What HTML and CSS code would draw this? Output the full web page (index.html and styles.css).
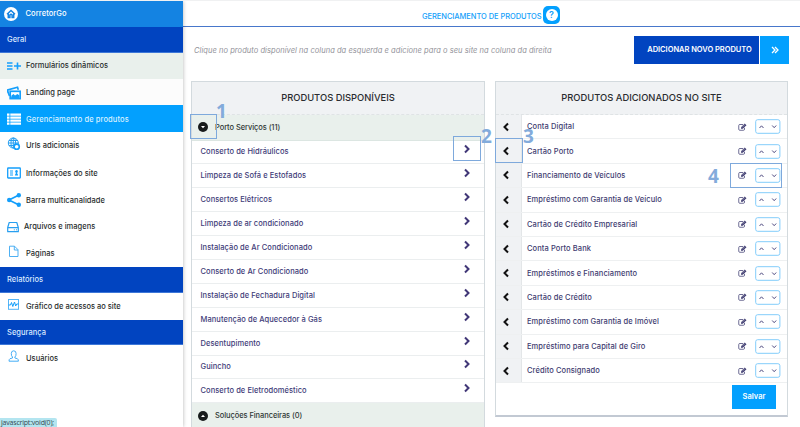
FILE: index.html
```html
<!DOCTYPE html>
<html lang="pt-BR">
<head>
<meta charset="utf-8">
<title>CorretorGo</title>
<link rel="stylesheet" href="styles.css">
</head>
<body>
<svg class="defs" width="0" height="0">
  <symbol id="right" viewBox="0 0 8 10"><path d="M2 1.5 5.5 5 2 8.5" fill="none" stroke="currentColor" stroke-width="2"/></symbol>
  <symbol id="left" viewBox="0 0 8 10"><path d="M6 1.5 2.5 5 6 8.500" fill="none" stroke="currentColor" stroke-width="2"/></symbol>
  <symbol id="edit" viewBox="0 0 18 16"><path d="M13 9.500V12.500a2 2 0 0 1-2 2H3.500a2 2 0 0 1-2-2V5a2 2 0 0 1 2-2H10" fill="none" stroke="currentColor" stroke-width="1.500"/><path d="M6 11.500V8.500L13.500 1 17 4.300 9.500 11.500Z" fill="currentColor"/><path d="M8 9 14 3" stroke="#fff" stroke-width=".8"/></symbol>
  <symbol id="updown" viewBox="0 0 26 15"><rect x=".7" y=".7" width="24.200" height="13.600" rx="2" fill="#fff" stroke="#83cdfb" stroke-width="1"/><path d="M4.500 9 6.500 6.800 8.500 9M17.200 6.500l2 2.200 2-2.200" fill="none" stroke="#524e83" stroke-width="1"/></symbol>
</svg>
<div class="app">
  <aside class="sidebar">
    <div class="brand"><svg width="14" height="14" viewBox="0 0 14 14"><circle cx="7" cy="7" r="7" fill="#fff"/><path d="M3 7.200 7 3.500l4 3.700M4.300 6.800v3.700h1.600V8q1.100-1.300 2.200 0v2.500h1.600V6.800" fill="none" stroke="#1483e2" stroke-width="1.500"/></svg><span>CorretorGo</span></div>
    <div class="section geral">Geral</div>
    <a class="item mint"><svg width="14" height="14" viewBox="0 0 14 14"><path d="M0 4h5.500M0 7h5.500M0 10h5.500M7 7h7M10.500 3.500v7" stroke="#159ffb" stroke-width="1.600"/></svg><span>Formulários dinâmicos</span></a>
    <a class="item soft"><svg width="14" height="14" viewBox="0 0 14 14"><path d="M.8 6.500V4L10.500 1.300l.8 2.500M1 6l1.500 4" fill="none" stroke="#159ffb" stroke-width="1.700"/><rect x="3.200" y="5.300" width="10" height="7.300" fill="#fff" stroke="#159ffb" stroke-width="1.700"/><path d="m4 12 .5-2.500L6.500 8l1.500 1.500L10.500 8l2 1.500V12Z" fill="#159ffb"/></svg><span>Landing page</span></a>
    <a class="item active"><svg width="14" height="14" viewBox="0 0 14 14"><path d="M0 2.700h2.500M0 5.700h2.500M0 8.700h2.500M0 11.700h2.500M3.300 2.700H14M3.300 5.700H14M3.300 8.700H14M3.300 11.700H14" stroke="#fff" stroke-width="2.200"/></svg><span>Gerenciamento de produtos</span></a>
    <a class="item urls"><svg width="14" height="14" viewBox="0 0 14 14"><g fill="none" stroke="#289ff0" stroke-width="1"><circle cx="6.300" cy="6" r="5"/><ellipse cx="6.300" cy="6" rx="2.300" ry="5"/><path d="M1.300 6h10M2 3.500h8.600M2 8.500h7M6.300 1v10"/></g><circle cx="9.700" cy="9.700" r="2.600" fill="#fff" stroke="#159ffb" stroke-width="1.600"/></svg><span>Urls adicionais</span></a>
    <a class="item info"><svg width="14" height="14" viewBox="0 0 14 14"><rect x=".7" y="2" width="12.600" height="10" rx=".5" fill="#fff" stroke="#159ffb" stroke-width="1.300"/><path d="M3 5h3M3 7h3M3 9h3" stroke="#159ffb" stroke-width="1.100"/><circle cx="9.500" cy="5.300" r="1.200" fill="#159ffb"/><path d="M8.700 6h1.600v2.200H11V9.500H8V8.200h.7Z" fill="#159ffb"/></svg><span>Informações do site</span></a>
    <a class="item"><svg width="14" height="14" viewBox="0 0 14 14"><path d="M12 2 2 7l10 5" fill="none" stroke="#159ffb" stroke-width="1.700"/><g fill="#159ffb"><circle cx="11.800" cy="2.200" r="2.200"/><circle cx="2.200" cy="7" r="2.200"/><circle cx="11.800" cy="11.800" r="2.200"/></g></svg><span>Barra multicanalidade</span></a>
    <a class="item files"><svg width="12" height="14" viewBox="0 0 12 14"><path d="M.7 7.500 2.200 2.500h7.600l1.500 5v4.200H.7ZM.7 7.700h10.600" fill="none" stroke="#289ff0" stroke-width="1.200" stroke-linejoin="round"/><path d="M6.800 9.800h1M9 9.800h1" stroke="#289ff0"/></svg><span>Arquivos e imagens</span></a>
    <a class="item pages"><svg width="14" height="14" viewBox="0 0 14 14"><path d="M2.500 1.200H7.500l3.500 3.500v6.800H2.500ZM7.300 1.200V5H11" fill="none" stroke="#3aa7f2" stroke-width=".9"/></svg><span>Páginas</span></a>
    <div class="section rel">Relatórios</div>
    <a class="item graph"><svg width="14" height="14" viewBox="0 0 14 14"><rect x="1.500" y="1.500" width="10" height="9.800" fill="none" stroke="#55b5f7"/><path d="M1.500 7h2l1-2.500 1.300 4L7.500 4 8.700 8l1-2h2" fill="none" stroke="#159ffb"/></svg><span>Gráfico de acessos ao site</span></a>
    <div class="section seg">Segurança</div>
    <a class="item users"><svg width="14" height="14" viewBox="0 0 14 14"><path d="M4.300 3.500q0-2.700 2.400-2.700T9.100 3.500q0 2.700-1.200 3.500v1l2.500.7q1 .5 1 2.500H2q0-2 1-2.500L5.500 8V7Q4.300 6.200 4.300 3.500Z" fill="none" stroke="#45aef6" stroke-width="1"/></svg><span>Usuários</span></a>
    <div class="status">javascript:void(0);</div>
  </aside>
  <main>
    <header><h1>GERENCIAMENTO DE PRODUTOS</h1><span class="help"><b>?</b></span></header>
    <div class="bar">
      <p>Clique no produto disponível na coluna da esquerda e adicione para o seu site na coluna da direita</p>
      <button class="add">ADICIONAR NOVO PRODUTO</button>
      <button class="next"><svg width="8" height="8" viewBox="0 0 8 8"><path d="m1 1 3 3-3 3M4 1l3 3-3 3" fill="none" stroke="#fff" stroke-width="1.300"/></svg></button>
    </div>
    <div class="cols">
      <section class="panel available">
        <h2>PRODUTOS DISPONÍVEIS</h2>
        <div class="group"><svg width="10" height="10" viewBox="0 0 10 10"><circle cx="5" cy="5" r="5" fill="#171b1b"/><path d="M3 4h4L5 6.300Z" fill="#fff"/></svg><span>Porto Serviços (11)</span></div>
        <div class="row"><span>Conserto de Hidráulicos</span><svg><use href="#right"/></svg></div>
        <div class="row"><span>Limpeza de Sofá e Estofados</span><svg><use href="#right"/></svg></div>
        <div class="row"><span>Consertos Elétricos</span><svg><use href="#right"/></svg></div>
        <div class="row"><span>Limpeza de ar condicionado</span><svg><use href="#right"/></svg></div>
        <div class="row"><span>Instalação de Ar Condicionado</span><svg><use href="#right"/></svg></div>
        <div class="row"><span>Conserto de Ar Condicionado</span><svg><use href="#right"/></svg></div>
        <div class="row"><span>Instalação de Fechadura Digital</span><svg><use href="#right"/></svg></div>
        <div class="row"><span>Manutenção de Aquecedor à Gás</span><svg><use href="#right"/></svg></div>
        <div class="row"><span>Desentupimento</span><svg><use href="#right"/></svg></div>
        <div class="row"><span>Guincho</span><svg><use href="#right"/></svg></div>
        <div class="row"><span>Conserto de Eletrodoméstico</span><svg><use href="#right"/></svg></div>
        <div class="group"><svg width="10" height="10" viewBox="0 0 10 10"><circle cx="5" cy="5" r="5" fill="#171b1b"/><path d="M3 6h4L5 3.700Z" fill="#fff"/></svg><span>Soluções Financeiras (0)</span></div>
      </section>
      <section class="panel added">
        <h2>PRODUTOS ADICIONADOS NO SITE</h2>
        <div class="line"><i><svg class="back"><use href="#left"/></svg></i><span>Conta Digital</span><svg class="edit"><use href="#edit"/></svg><svg class="ud"><use href="#updown"/></svg></div>
        <div class="line"><i><svg class="back"><use href="#left"/></svg></i><span>Cartão Porto</span><svg class="edit"><use href="#edit"/></svg><svg class="ud"><use href="#updown"/></svg></div>
        <div class="line"><i><svg class="back"><use href="#left"/></svg></i><span>Financiamento de Veículos</span><svg class="edit"><use href="#edit"/></svg><svg class="ud"><use href="#updown"/></svg></div>
        <div class="line"><i><svg class="back"><use href="#left"/></svg></i><span>Empréstimo com Garantia de Veículo</span><svg class="edit"><use href="#edit"/></svg><svg class="ud"><use href="#updown"/></svg></div>
        <div class="line"><i><svg class="back"><use href="#left"/></svg></i><span>Cartão de Crédito Empresarial</span><svg class="edit"><use href="#edit"/></svg><svg class="ud"><use href="#updown"/></svg></div>
        <div class="line"><i><svg class="back"><use href="#left"/></svg></i><span>Conta Porto Bank</span><svg class="edit"><use href="#edit"/></svg><svg class="ud"><use href="#updown"/></svg></div>
        <div class="line"><i><svg class="back"><use href="#left"/></svg></i><span>Empréstimos e Financiamento</span><svg class="edit"><use href="#edit"/></svg><svg class="ud"><use href="#updown"/></svg></div>
        <div class="line"><i><svg class="back"><use href="#left"/></svg></i><span>Cartão de Crédito</span><svg class="edit"><use href="#edit"/></svg><svg class="ud"><use href="#updown"/></svg></div>
        <div class="line"><i><svg class="back"><use href="#left"/></svg></i><span>Empréstimo com Garantia de Imóvel</span><svg class="edit"><use href="#edit"/></svg><svg class="ud"><use href="#updown"/></svg></div>
        <div class="line"><i><svg class="back"><use href="#left"/></svg></i><span>Empréstimo para Capital de Giro</span><svg class="edit"><use href="#edit"/></svg><svg class="ud"><use href="#updown"/></svg></div>
        <div class="line"><i><svg class="back"><use href="#left"/></svg></i><span>Crédito Consignado</span><svg class="edit"><use href="#edit"/></svg><svg class="ud"><use href="#updown"/></svg></div>
        <button class="save">Salvar</button>
      </section>
    </div>
  </main>
  <div class="mark m1"></div><b class="num n1">1</b>
  <div class="mark m2"></div><b class="num n2">2</b>
  <div class="mark m3"></div><b class="num n3">3</b>
  <div class="mark m4"></div><b class="num n4">4</b>
</div>
</body>
</html>
```
FILE: styles.css
```css
* { box-sizing: border-box; }
body { margin: 0; font-family: Inter, "Liberation Sans", sans-serif; font-size: 7.5px; background: #fff; }
svg { display: block; flex: none; }
.defs { position: absolute; }
.app { position: relative; display: flex; width: 800px; height: 427px; overflow: hidden; border-top: 1px solid #f0f1f2; }
button { border: 0; padding: 0; font-family: inherit; color: #fff; }

.sidebar { width: 183px; flex: none; display: flex; flex-direction: column; box-shadow: 0 0 4px rgba(0,0,0,.3); z-index: 1; background: #fff; }
.brand { height: 26px; flex: none; background: #1483e2; color: #fff; display: flex; align-items: center; padding: 0 0 1px 4px; gap: 7.5px; font-weight: 500; letter-spacing: .09px; }
.section { height: 25.5px; flex: none; background: #0144c0; color: #dceaff; padding-left: 7px; line-height: 25px; font-weight: 500; border-bottom: 1px solid #3d77d8; letter-spacing: .04px; }
.item { height: 26.5px; flex: none; display: flex; align-items: center; padding-left: 7px; color: #272c2c; font-weight: 500; white-space: nowrap; letter-spacing: .04px; }
.item svg { margin-right: 5px; }
.mint { background: #e9f0ec; height: 26px; }
.soft { background: #fcfcfc; padding-top: 2px; }
.active { background: #03a0fe; color: #d8f0ff; padding-top: 2px; letter-spacing: .12px; }
.urls { height: 28px; }
.urls svg, .pages svg, .graph svg, .users svg { margin-top: -3px; }
.info { height: 27.5px; }
.rel { margin-top: .5px; }
.graph { height: 27px; letter-spacing: 0; }

.status { margin-top: auto; width: 57px; height: 9px; background: #b3e5f0; color: #34474e; font: 7px/9px "Open Sans", sans-serif; padding-left: 1px; border-radius: 0 2px 0 0; white-space: nowrap; letter-spacing: -.2px; }

main { flex: 1; min-width: 0; }
header { height: 26px; border-bottom: 1px solid #4777cb; display: flex; align-items: flex-start; padding: 5px 0 0 239px; }
h1 { margin: 0; width: 121px; font-size: 7.5px; line-height: 21px; font-weight: 500; color: #169ffa; white-space: nowrap; letter-spacing: -.06px; }
.help { width: 17px; height: 18px; border-radius: 5px; background: #03a0fe; display: flex; align-items: center; justify-content: center; }
.help b { width: 12px; height: 12px; border-radius: 50%; background: #fff; color: #159ffb; font-size: 9px; line-height: 12px; text-align: center; font-weight: 600; }
.bar { height: 54px; display: flex; align-items: flex-start; padding: 9px 11px 0 11px; }
.bar p { flex: 1; margin: 0; line-height: 29px; font-size: 7.5px; font-style: italic; color: #929299; white-space: nowrap; letter-spacing: .055px; }
.add { width: 125px; height: 28px; background: #0144c0; font-size: 7.5px; font-weight: 600; padding: 0 0 2px 6px; white-space: nowrap; letter-spacing: -.03px; }
.next { width: 29px; height: 28px; margin-left: 1px; background: #03a0fe; display: flex; align-items: center; justify-content: center; }
.cols { display: flex; gap: 10px; padding-left: 8px; align-items: flex-start; }
.panel { width: 294px; border: 1px solid #d3dade; background: #fff; }
.available { height: 350px; }
.added { height: 336px; width: 293px; border-bottom: 2px solid #c2c9d3; }
h2 { margin: 0; height: 33px; background: #f0f2f4; border-bottom: 1px dashed #dfe3e5; text-align: center; font-size: 9.4px; line-height: 32px; font-weight: 500; color: #2a2c2f; }
.group { height: 25.5px; background: #e9f0ec; display: flex; align-items: center; padding-left: 6px; gap: 7px; color: #303836; font-weight: 500; border-bottom: 1px solid #dce6e2; letter-spacing: -.07px; }
.group:last-child { letter-spacing: -.07px; }
.row { height: 23.9px; display: flex; align-items: center; justify-content: space-between; padding: 0 13px 0 8.5px; color: #3e3b78; font-weight: 500; border-bottom: 1px solid #ebeeef; letter-spacing: .07px; }
.row svg { width: 8px; height: 10px; margin-top: -5px; color: #413777; }
.line { height: 24.4px; display: flex; align-items: center; color: #3e3b70; font-weight: 500; border-bottom: 1px solid #eef0f1; padding: 0 6px 0 0; letter-spacing: .09px; }
.line i { width: 26px; align-self: stretch; background: #f0f2f4; border-right: 1px solid #e3e6e8; display: flex; align-items: center; padding-left: 6px; }
.line span { margin-left: 5px; flex: 1; }
.back { width: 8px; height: 10px; color: #111; }
.edit { width: 9px; height: 8px; margin-right: 8px; }
.ud { width: 26px; height: 15px; }
.save { display: block; width: 44px; height: 24px; margin: 2px 11px 0 auto; background: #03a0fe; font-size: 7.5px; font-weight: 600; padding-bottom: 1px; }

.mark { position: absolute; z-index: 2; border: 1px solid #7ea9dc; }
.m1 { left: 190px; top: 113px; width: 27px; height: 25px; }
.m2 { left: 453px; top: 135px; width: 28px; height: 25px; }
.m3 { left: 495px; top: 137px; width: 28px; height: 25px; }
.m4 { left: 730px; top: 162px; width: 52px; height: 25px; }
.num { position: absolute; z-index: 2; font: bold 19px/20px "Open Sans", sans-serif; color: #83abdb; }
.n1 { left: 216px; top: 100px; }
.n2 { left: 481px; top: 125px; }
.n3 { left: 523px; top: 125px; }
.n4 { left: 708px; top: 165px; }
```
